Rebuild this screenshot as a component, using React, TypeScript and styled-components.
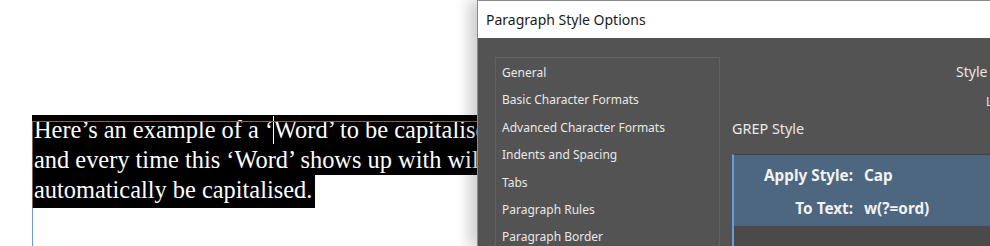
import styled, { createGlobalStyle } from "styled-components";

const GlobalStyle = createGlobalStyle`
  html, body {
    margin: 0;
    padding: 0;
    background: #ffffff;
  }
  body {
    width: 990px;
    height: 246px;
    overflow: hidden;
  }
`;

const Page = styled.div`
  display: flex;
  width: 990px;
  height: 246px;
  overflow: hidden;
`;

// ---- document side ----
const DocArea = styled.div`
  width: 477px;
  flex-shrink: 0;
  height: 246px;
  overflow: hidden;
  display: flex;
  flex-direction: column;
`;

const TextFrame = styled.div`
  position: relative;
  margin: 115px 0 0 32px;
  font-family: "Liberation Serif", "DejaVu Serif", serif;
  font-size: 24.4px;
  color: #ffffff;

  &::before {
    content: "";
    position: absolute;
    left: 0;
    right: 0;
    top: 6px;
    height: 1px;
    background: #8a6344;
  }
  &::after {
    content: "";
    position: absolute;
    left: 0;
    top: 6px;
    bottom: 0;
    width: 1px;
    background: #8a6344;
  }
`;

const Line = styled.div<{ $last?: boolean }>`
  background: #000000;
  white-space: nowrap;
  line-height: 30px;
  height: ${(p) => (p.$last ? "33px" : "30px")};
  padding-left: 2px;
  width: ${(p) => (p.$last ? "fit-content" : "auto")};
  padding-right: ${(p) => (p.$last ? "3px" : "0")};
`;

const Caret = styled.span`
  display: inline-block;
  width: 1px;
  height: 28px;
  background: #ffffff;
  vertical-align: -6px;
`;

const Guide = styled.div`
  flex: 1;
  margin-left: 32px;
  border-left: 1px solid #6b9bd8;
`;

// ---- dialog ----
const Dialog = styled.div`
  position: relative;
  flex: 1;
  height: 246px;
  display: flex;
  flex-direction: column;
  background: #535353;
  border-top: 1px solid #8a8a8a;
  border-left: 1px solid #8a8a8a;
  box-shadow: -8px 0 14px rgba(0, 0, 0, 0.2);
  overflow: hidden;
`;

const TitleBar = styled.div`
  height: 37px;
  flex-shrink: 0;
  background: #ffffff;
  display: flex;
  align-items: center;
  padding-left: 8px;
  font-family: "Noto Sans", "Open Sans", sans-serif;
  font-size: 14px;
  color: #1b1b1b;
`;

const Body = styled.div`
  flex: 1;
  display: flex;
  padding: 19px 0 0 17px;
  font-family: "Noto Sans", "Open Sans", sans-serif;
  color: #e8e8e8;
`;

const CategoryList = styled.div`
  width: 223px;
  flex-shrink: 0;
  border: 1px solid #616161;
  border-bottom: none;
  padding-top: 1px;
`;

const Category = styled.div`
  height: 27.4px;
  line-height: 27.4px;
  padding-left: 6px;
  font-size: 12px;
  white-space: nowrap;
`;

const Settings = styled.div`
  flex: 1;
  display: flex;
  flex-direction: column;
  padding-left: 12px;
  min-width: 0;
`;

const FieldRow = styled.div<{ $indent: number; $size: number }>`
  padding-left: ${(p) => p.$indent}px;
  font-size: ${(p) => p.$size}px;
  height: 30px;
  line-height: 30px;
  white-space: nowrap;
`;

const SectionTitle = styled.div`
  font-size: 14.4px;
  height: 34px;
  line-height: 34px;
  white-space: nowrap;
  margin-top: -5px;
`;

const RuleList = styled.div`
  flex: 1;
  margin-top: 8px;
  background: #4a4a4a;
  border-top: 1px solid #414141;
  border-left: 2px solid #6b9bd8;
`;

const RuleItem = styled.div`
  background: #4e6780;
  display: grid;
  grid-template-columns: 119px 1fr;
  column-gap: 11px;
  padding: 4px 0 1px;
  font-weight: 700;
  font-size: 15.3px;
  color: #f2f2f2;
`;

const RuleLabel = styled.div`
  text-align: right;
  height: 33px;
  line-height: 33px;
  white-space: nowrap;
`;

const RuleValue = styled.div`
  height: 33px;
  line-height: 33px;
  white-space: nowrap;
`;

const categories = [
  "General",
  "Basic Character Formats",
  "Advanced Character Formats",
  "Indents and Spacing",
  "Tabs",
  "Paragraph Rules",
  "Paragraph Border",
];

export default function App() {
  return (
    <>
      <GlobalStyle />
      <Page>
        <DocArea>
          <TextFrame>
            <Line>
              Here’s an example of a ‘<Caret />Word’ to be capitalised
            </Line>
            <Line>and every time this ‘Word’ shows up with will</Line>
            <Line $last>automatically be capitalised.</Line>
          </TextFrame>
          <Guide />
        </DocArea>
        <Dialog>
          <TitleBar>Paragraph Style Options</TitleBar>
          <Body>
            <CategoryList>
              {categories.map((c) => (
                <Category key={c}>{c}</Category>
              ))}
            </CategoryList>
            <Settings>
              <FieldRow $indent={224} $size={14}>
                Style Name: GREP Cap
              </FieldRow>
              <FieldRow $indent={254} $size={12}>
                Location:
              </FieldRow>
              <SectionTitle>GREP Style</SectionTitle>
              <RuleList>
                <RuleItem>
                  <RuleLabel>Apply Style:</RuleLabel>
                  <RuleValue>Cap</RuleValue>
                  <RuleLabel>To Text:</RuleLabel>
                  <RuleValue>w(?=ord)</RuleValue>
                </RuleItem>
              </RuleList>
            </Settings>
          </Body>
        </Dialog>
      </Page>
    </>
  );
}
